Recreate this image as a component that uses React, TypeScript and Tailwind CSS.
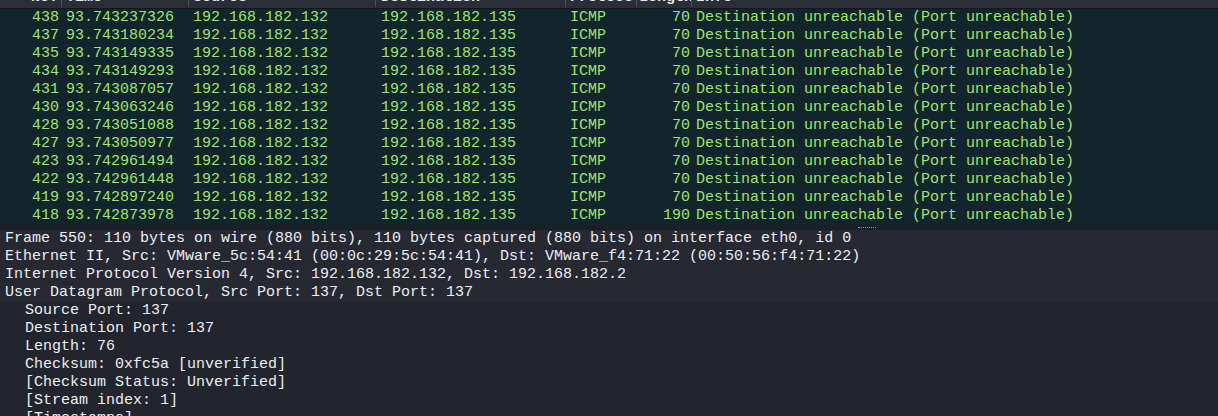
const mono = "font-['Liberation_Mono','DejaVu_Sans_Mono',monospace]"

const packets = [
    ['438', '93.743237326', '70'],
    ['437', '93.743180234', '70'],
    ['435', '93.743149335', '70'],
    ['434', '93.743149293', '70'],
    ['431', '93.743087057', '70'],
    ['430', '93.743063246', '70'],
    ['428', '93.743051088', '70'],
    ['427', '93.743050977', '70'],
    ['423', '93.742961494', '70'],
    ['422', '93.742961448', '70'],
    ['419', '93.742897240', '70'],
    ['418', '93.742873978', '190'],
]

const headers = [
    { label: 'No.', w: 'w-[62px]', align: 'justify-end pr-[3px]' },
    { label: 'Time', w: 'w-[127px]', align: 'pl-[4px]' },
    { label: 'Source', w: 'w-[187px]', align: 'pl-[4px]' },
    { label: 'Destination', w: 'w-[190px]', align: 'pl-[5px]' },
    { label: 'Protocol', w: 'w-[71px]', align: 'pl-[4px]' },
    { label: 'Length', w: 'w-[55px]', align: 'pl-[2px]' },
    { label: 'Info', w: 'flex-1', align: 'pl-[4px]' },
]

const tree = [
    { text: 'Frame 550: 110 bytes on wire (880 bits), 110 bytes captured (880 bits) on interface eth0, id 0', top: true },
    { text: 'Ethernet II, Src: VMware_5c:54:41 (00:0c:29:5c:54:41), Dst: VMware_f4:71:22 (00:50:56:f4:71:22)', top: true },
    { text: 'Internet Protocol Version 4, Src: 192.168.182.132, Dst: 192.168.182.2', top: true },
    { text: 'User Datagram Protocol, Src Port: 137, Dst Port: 137', top: true },
    { text: 'Source Port: 137' },
    { text: 'Destination Port: 137' },
    { text: 'Length: 76' },
    { text: 'Checksum: 0xfc5a [unverified]' },
    { text: '[Checksum Status: Unverified]' },
    { text: '[Stream index: 1]' },
    { text: '[Timestamps]', arrow: true },
]

export default function App() {
    return (
        <div className={`flex h-[416px] w-[1218px] flex-col overflow-hidden bg-[#22252e] text-[15px] ${mono}`}>
            {/* Column header, mostly scrolled off */}
            <div className="h-[9px] shrink-0 overflow-hidden border-b border-[#15171c] bg-[#2a2e38]">
                <div className="-mt-[12px] flex h-[19px] font-bold text-[#e6e6e6]">
                    {headers.map((h) => (
                        <div
                            key={h.label}
                            className={`flex ${h.w} ${h.align} items-center overflow-hidden whitespace-pre border-r border-[#4a4f5c] leading-[19px] last:border-r-0`}
                        >
                            {h.label}
                        </div>
                    ))}
                </div>
            </div>

            {/* Packet list */}
            <div className="shrink-0 bg-[#12252c] text-[#9ee46c]">
                {packets.map(([no, time, len]) => (
                    <div key={no} className="flex h-[18px] items-center whitespace-pre leading-[18px]">
                        <div className="w-[62px] pr-[3px] text-right">{no}</div>
                        <div className="w-[127px] pl-[4px]">{time}</div>
                        <div className="w-[187px] pl-[4px]">192.168.182.132</div>
                        <div className="w-[190px] pl-[5px]">192.168.182.135</div>
                        <div className="w-[71px] pl-[4px]">ICMP</div>
                        <div className="w-[55px] pr-[2px] text-right">{len}</div>
                        <div className="flex-1 pl-[4px]">Destination unreachable (Port unreachable)</div>
                    </div>
                ))}
            </div>

            {/* Splitter */}
            <div className="flex h-[5px] shrink-0 items-center bg-[#1b1e25] pl-[858px]">
                <div className="h-px w-[18px] border-t border-dotted border-[#8a8f99]" />
            </div>

            {/* Packet details */}
            <div className="flex-1 whitespace-pre text-[#eceef2]">
                {tree.map((t) => (
                    <div
                        key={t.text}
                        className={`flex h-[18px] items-center leading-[18px] ${t.top ? 'bg-[#262932] pl-[5px]' : 'pl-[25px]'}`}
                    >
                        {t.arrow && <span className="-ml-[16px] w-[16px] text-[10px] text-[#b8bcc4]">▸</span>}
                        {t.text}
                    </div>
                ))}
            </div>
        </div>
    )
}
